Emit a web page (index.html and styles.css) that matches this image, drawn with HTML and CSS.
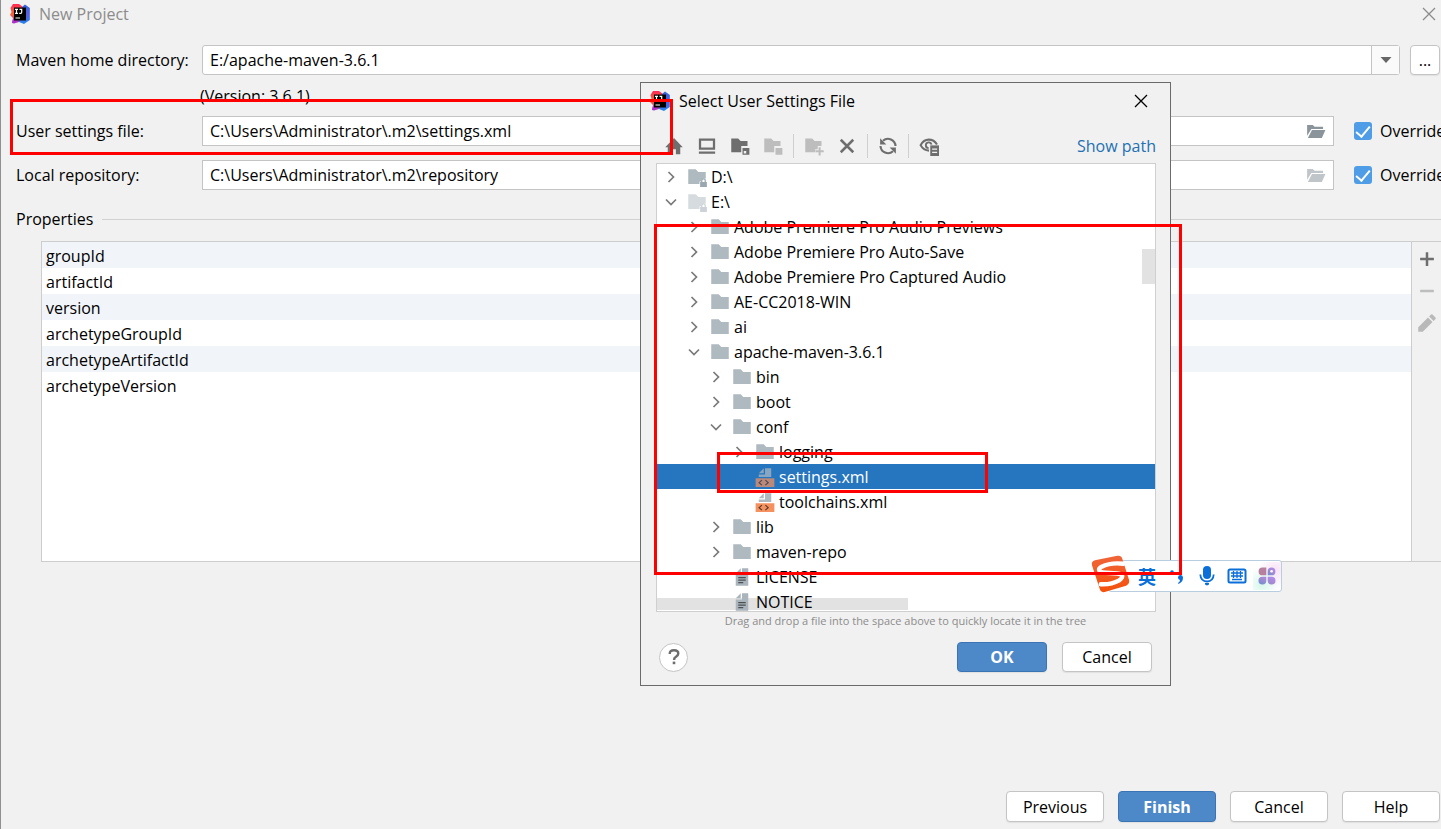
FILE: index.html
```html
<!DOCTYPE html>
<html lang="en">
<head>
<meta charset="utf-8">
<title>New Project</title>
<link rel="stylesheet" href="styles.css">
</head>
<body>
<svg class="defs" aria-hidden="true">
  <defs>
    <linearGradient id="ij-blue" x1="0" y1="0" x2="0" y2="1"><stop offset="0" stop-color="#2f63e0"/><stop offset=".5" stop-color="#5a5fe0"/><stop offset="1" stop-color="#1f86f0"/></linearGradient>
    <linearGradient id="ij-pink" x1="0" y1="0" x2="0" y2="1"><stop offset="0" stop-color="#fe2857"/><stop offset=".5" stop-color="#f9672f"/><stop offset="1" stop-color="#a02fd0"/></linearGradient>
    <linearGradient id="sg-orange" x1="0" y1="0" x2="0" y2="1"><stop offset="0" stop-color="#f0653a"/><stop offset="1" stop-color="#f4510b"/></linearGradient>
    <linearGradient id="petal" x1="0" y1="1" x2="1" y2="0"><stop offset="0" stop-color="#6a8fd0"/><stop offset=".5" stop-color="#a58ad2"/><stop offset="1" stop-color="#b58af5"/></linearGradient>
    <symbol id="i-idea" viewBox="0 0 20 20">
      <path fill="url(#ij-pink)" d="M3 0h6l4 3v13l-4 2-5 1.500-2-.5 1-5-3-3 1.500-3L.5 4z"/>
      <path fill="url(#ij-blue)" d="M12 3l3-2.500L19.800 4v12L14 20l-5-2z"/>
      <path fill="#b02fd8" d="M3 15h8l-6 3-3 1z"/>
      <path fill="#000" d="M4 3.500h12v13H4z"/>
      <path fill="none" stroke="#fff" stroke-width="1.200" d="M5 5.300h3M6.500 5.300v4M5 9.300h3M9.500 5.300h2.200v3q0 1-1 1H9.200M5.500 14h4.500"/>
    </symbol>
    <symbol id="i-close" viewBox="0 0 14 14"><path fill="none" stroke="currentColor" stroke-width="1.300" d="M1 1l12 12M13 1L1 13"/></symbol>
    <symbol id="i-folder" viewBox="0 0 16 16"><path fill="#aeb9c0" d="M1 1.800h6l2 2.200h6v9.600H1z"/></symbol>
    <symbol id="i-disk" viewBox="0 0 16 16"><path fill="#aeb9c0" d="M1 1.800h6l2 2.200h6v5.200h-1.500a2 2 0 0 0-2 1.200v1.200H10v2H1z"/><path fill="#9aa7b0" fill-rule="evenodd" d="M10.500 12h.8v-1.200a1.900 1.900 0 0 1 3.800 0V12h.8v4h-5.400zM12.300 12h1.800v-1.200a.9.900 0 0 0-1.800 0z"/></symbol>
    <symbol id="i-open" viewBox="0 0 20 16"><path fill="currentColor" d="M0 1h6l2 2h9v2.200H4.500L0 12.500zM5.200 6.500H19.500L15.700 15H.8z"/></symbol>
    <symbol id="i-right" viewBox="0 0 12 12"><path fill="none" stroke="#7a7a7a" stroke-width="1.700" d="M3.500 1l5 5-5 5"/></symbol>
    <symbol id="i-down" viewBox="0 0 12 12"><path fill="none" stroke="#7a7a7a" stroke-width="1.700" d="M1 3.500l5 5 5-5"/></symbol>
    <symbol id="i-text" viewBox="0 0 16 16"><path fill="#a9b4bc" d="M7 1v4H3zM8 1h5v14H3V6h5z"/><path stroke="#4c5053" stroke-width="1.100" d="M5 8.500h6M5 10.500h6M5 12.500h4"/></symbol>
    <symbol id="i-xml" viewBox="0 0 16 16"><path fill="#aeb9c0" d="M7 1v4H3zM8 1h5v7H3V6h5z"/><path class="xml-tag" d="M.5 9h15v7H.5z"/><path fill="none" stroke="#5a3a2c" stroke-width="1" d="M5.500 10.500L3.300 12.500l2.200 2M8.300 10.500l2.200 2-2.200 2"/></symbol>
  </defs>
</svg>

<main class="window">
  <header class="titlebar">
    <svg class="logo"><use href="#i-idea"/></svg>
    <h1 class="title muted">New Project</h1>
    <button class="plain close muted" aria-label="Close window"><svg class="x"><use href="#i-close"/></svg></button>
  </header>

  <form class="form">
    <label for="home">Maven home directory:</label>
    <div class="field-row">
      <div class="combo">
        <select id="home"><option>E:/apache-maven-3.6.1</option></select>
        <span class="combo-arrow"><svg width="12" height="8" viewBox="0 0 12 8"><path fill="#666" d="M.5 1h11L6 7z"/></svg></span>
      </div>
      <button type="button" class="btn browse">...</button>
    </div>
    <p class="version">(Version: 3.6.1)</p>
    <label for="settings">User settings file:</label>
    <div class="field-row path-row">
      <div class="path"><input id="settings" type="text" value="C:\Users\Administrator\.m2\settings.xml"><button type="button" class="plain open" aria-label="Browse settings file"><svg><use href="#i-open"/></svg></button></div>
      <label class="check"><input type="checkbox" checked>Override</label>
    </div>
    <label for="repo">Local repository:</label>
    <div class="field-row path-row">
      <div class="path"><input id="repo" type="text" value="C:\Users\Administrator\.m2\repository"><button type="button" class="plain open dim" aria-label="Browse repository"><svg><use href="#i-open"/></svg></button></div>
      <label class="check"><input type="checkbox" checked>Override</label>
    </div>
  </form>

  <h2 class="section">Properties</h2>
  <section class="properties">
    <div class="table-area">
      <table>
        <tbody>
          <tr><td>groupId</td></tr>
          <tr><td>artifactId</td></tr>
          <tr><td>version</td></tr>
          <tr><td>archetypeGroupId</td></tr>
          <tr><td>archetypeArtifactId</td></tr>
          <tr><td>archetypeVersion</td></tr>
        </tbody>
      </table>
    </div>
    <div class="side-tools">
      <button class="plain" aria-label="Add"><svg viewBox="0 0 16 16"><path stroke="#6e6e6e" stroke-width="2" d="M8 2.500v11M2.500 8h11"/></svg></button>
      <button class="plain" aria-label="Remove"><svg viewBox="0 0 16 16"><path stroke="#bdbdbd" stroke-width="2" d="M2.500 8h11"/></svg></button>
      <button class="plain" aria-label="Edit"><svg viewBox="0 0 16 16"><path fill="#b9b9b9" d="M1 15v-3.600l7.800-7.800 3.600 3.600L4.600 15zM9.700 2.700l1.500-1.500q.6-.5 1.200 0l2.400 2.400q.5.600 0 1.200l-1.500 1.500z"/></svg></button>
    </div>
  </section>

  <footer class="footer">
    <button class="btn">Previous</button>
    <button class="btn primary">Finish</button>
    <button class="btn">Cancel</button>
    <button class="btn">Help</button>
  </footer>
</main>

<section class="dialog" role="dialog" aria-labelledby="dialog-title">
  <header class="dialog-title">
    <svg class="logo"><use href="#i-idea"/></svg>
    <h2 class="title" id="dialog-title">Select User Settings File</h2>
    <button class="plain close" aria-label="Close dialog"><svg class="x"><use href="#i-close"/></svg></button>
  </header>

  <div class="toolbar">
    <button class="plain" aria-label="Home"><svg viewBox="0 0 16 16"><path fill="#6e6e6e" d="M8 1.500L15 9h-2v5.500H9.500v-4h-3v4H3V9H1z"/></svg></button>
    <button class="plain" aria-label="Desktop"><svg viewBox="0 0 16 16"><path fill="#6e6e6e" fill-rule="evenodd" d="M1.500 2h13v9h-13zM3.300 3.800v5.400h9.400V3.800zM1.500 12.400h13v1.800h-13z"/></svg></button>
    <button class="plain" aria-label="Project"><svg viewBox="0 0 16 16"><path fill="#6e6e6e" d="M1 2h5.500l2 2H14v4H9v5H1z"/><path fill="#6e6e6e" fill-rule="evenodd" d="M10 9.500h5.500V15H10zM11 12v2h2v-2z"/></svg></button>
    <button class="plain" aria-label="Module"><svg viewBox="0 0 16 16"><path fill="#bdbdbd" d="M1 2h5.500l2 2H14v4H9v5H1zM10 9.500h5.500V15H10z"/></svg></button>
    <span class="sep"></span>
    <button class="plain" aria-label="New folder"><svg viewBox="0 0 16 16"><path fill="#bdbdbd" d="M1 2h5.500l2 2H14v4h-3v2.500H9V13H1z"/><path stroke="#bdbdbd" stroke-width="1.600" d="M12.500 9v6.500M9.300 12.200h6.500"/></svg></button>
    <button class="plain" aria-label="Delete"><svg viewBox="0 0 16 16"><path fill="none" stroke="#6e6e6e" stroke-width="2" d="M3 3l10 10M13 3L3 13"/></svg></button>
    <span class="sep"></span>
    <button class="plain" aria-label="Refresh"><svg viewBox="0 0 16 16"><path fill="none" stroke="#6e6e6e" stroke-width="1.700" d="M14 8A6 6 0 0 0 4 3.800M2 8a6 6 0 0 0 10 4.200"/><path fill="#6e6e6e" d="M1.700 1.800v5h5zM14.300 14.200v-5h-5z"/></svg></button>
    <span class="sep"></span>
    <button class="plain" aria-label="Show hidden files"><svg viewBox="0 0 16 16"><path fill="none" stroke="#6e6e6e" stroke-width="1.700" d="M8 11.700Q3.500 11.500 1.300 7.300 3.600 2.900 7.800 2.900t6.600 3.900"/><path fill="none" stroke="#6e6e6e" stroke-width="1.500" d="M7.700 9.700A2.300 2.300 0 1 1 10 6.900"/><path fill="#6e6e6e" d="M9 7.500h7V16H9z"/><path stroke="#f2f2f2" d="M10.500 10.500h4M10.500 13h4"/></svg></button>
    <a class="show-path" href="#path">Show path</a>
  </div>

  <div class="tree" role="tree">
    <div class="node l0" role="treeitem"><svg class="chev"><use href="#i-right"/></svg><svg class="ico"><use href="#i-disk"/></svg>D:\</div>
    <div class="node l0" role="treeitem"><svg class="chev"><use href="#i-down"/></svg><svg class="ico faded"><use href="#i-disk"/></svg>E:\</div>
    <div class="node l1" role="treeitem"><svg class="chev"><use href="#i-right"/></svg><svg class="ico"><use href="#i-folder"/></svg>Adobe Premiere Pro Audio Previews</div>
    <div class="node l1" role="treeitem"><svg class="chev"><use href="#i-right"/></svg><svg class="ico"><use href="#i-folder"/></svg>Adobe Premiere Pro Auto-Save</div>
    <div class="node l1" role="treeitem"><svg class="chev"><use href="#i-right"/></svg><svg class="ico"><use href="#i-folder"/></svg>Adobe Premiere Pro Captured Audio</div>
    <div class="node l1" role="treeitem"><svg class="chev"><use href="#i-right"/></svg><svg class="ico"><use href="#i-folder"/></svg>AE-CC2018-WIN</div>
    <div class="node l1" role="treeitem"><svg class="chev"><use href="#i-right"/></svg><svg class="ico"><use href="#i-folder"/></svg>ai</div>
    <div class="node l1" role="treeitem"><svg class="chev"><use href="#i-down"/></svg><svg class="ico"><use href="#i-folder"/></svg>apache-maven-3.6.1</div>
    <div class="node l2" role="treeitem"><svg class="chev"><use href="#i-right"/></svg><svg class="ico"><use href="#i-folder"/></svg>bin</div>
    <div class="node l2" role="treeitem"><svg class="chev"><use href="#i-right"/></svg><svg class="ico"><use href="#i-folder"/></svg>boot</div>
    <div class="node l2" role="treeitem"><svg class="chev"><use href="#i-down"/></svg><svg class="ico"><use href="#i-folder"/></svg>conf</div>
    <div class="node l3" role="treeitem"><svg class="chev"><use href="#i-right"/></svg><svg class="ico"><use href="#i-folder"/></svg>logging</div>
    <div class="node l3 selected" role="treeitem" aria-selected="true"><span class="chev"></span><svg class="ico"><use href="#i-xml"/></svg>settings.xml</div>
    <div class="node l3" role="treeitem"><span class="chev"></span><svg class="ico"><use href="#i-xml"/></svg>toolchains.xml</div>
    <div class="node l2" role="treeitem"><svg class="chev"><use href="#i-right"/></svg><svg class="ico"><use href="#i-folder"/></svg>lib</div>
    <div class="node l2" role="treeitem"><svg class="chev"><use href="#i-right"/></svg><svg class="ico"><use href="#i-folder"/></svg>maven-repo</div>
    <div class="node l2" role="treeitem"><span class="chev"></span><svg class="ico"><use href="#i-text"/></svg>LICENSE</div>
    <div class="node l2" role="treeitem"><span class="chev"></span><svg class="ico"><use href="#i-text"/></svg>NOTICE</div>
    <span class="thumb-v"></span>
    <span class="thumb-h"></span>
  </div>
  <p class="hint">Drag and drop a file into the space above to quickly locate it in the tree</p>

  <footer class="dialog-actions">
    <button class="help" aria-label="Help"><svg width="14" height="18" viewBox="0 0 14 18"><path fill="none" stroke="#6e6e6e" stroke-width="2.400" d="M2.700 6Q2.700 2.200 7 2.200T11.300 5.500Q11.300 7.300 9 8.700 7 9.900 7 12"/><path fill="#6e6e6e" d="M5.700 13.600h2.600v2.600H5.700z"/></svg></button>
    <button class="btn primary">OK</button>
    <button class="btn">Cancel</button>
  </footer>
</section>

<aside class="ime" lang="zh-CN">
  <svg class="ime-logo" viewBox="0 0 40 38"><path fill="url(#sg-orange)" d="M4 5L27 .3Q31-.3 32 3l7 22q1 4-3 6l-22 6.500q-4 .8-5-3L1 10q-.8-4 3-5z"/><path fill="none" stroke="#fff" stroke-width="4.500" stroke-linecap="round" d="M33 8.500Q20 7 11 11.500 5 15 12 17.500L27 18.500Q36 20 29 25.500 21 30 10 29.500"/></svg>
  <span class="ime-mode">英</span>
  <svg class="ime-ico" viewBox="0 0 20 20"><circle cx="5" cy="6" r="1.800" fill="#0a6fd8"/><path fill="#0a6fd8" d="M11 17q2-1 2-3a2.500 2.500 0 1 1 3-2.500q0 4.500-4.500 6.500z"/></svg>
  <svg class="ime-ico" viewBox="0 0 20 20"><rect x="6" y="0" width="8" height="13" rx="4" fill="#0a6fd8"/><path fill="none" stroke="#0a6fd8" stroke-width="1.800" d="M3.300 8.500q.5 7 6.700 7t6.700-7"/><path fill="#0a6fd8" d="M8 17h4v1.500l-2 1-2-1z"/></svg>
  <svg class="ime-ico" viewBox="0 0 20 20"><rect x="1.500" y="3.500" width="17" height="13" rx="1.500" fill="#fff" stroke="#0a6fd8" stroke-width="2"/><path fill="none" stroke="#0a6fd8" stroke-width="1.300" d="M4 7h12M4 10h12M6.500 5v7M10 5v7M13.500 5v7M5 13.500h10"/></svg>
  <span class="ime-skin"><svg class="ime-ico" viewBox="0 0 20 20"><g fill="url(#petal)"><path fill="#b8809f" d="M5.500 1.500H9.300v7.800H5.500a3.900 3.900 0 0 1 0-7.800z"/><path d="M14.500 1.500a3.900 3.900 0 1 1 0 7.800h-3.800V5.400a3.900 3.900 0 0 1 3.800-3.900z"/><path d="M5.500 10.700h3.800v3.900a3.900 3.900 0 1 1-3.800-3.900zM10.700 10.700h3.800a3.900 3.900 0 1 1-3.800 3.900z"/></g><circle cx="14.600" cy="5.300" r="1.300" fill="#fff"/></svg></span>
</aside>

<div class="mark mark-field"></div>
<div class="mark mark-tree"></div>
<div class="mark mark-file"></div>
</body>
</html>
```

FILE: styles.css
```css
* { box-sizing: border-box; }
body {
  margin: 0;
  min-height: 100vh;
  position: relative;
  overflow: hidden;
  background: #f1f1f1;
  color: #000;
  font: 16px/20px "Open Sans", "Noto Sans", "Noto Sans CJK SC", sans-serif;
}
h1, h2, p { margin: 0; font-size: inherit; font-weight: 400; }
button, input, select { font: inherit; color: inherit; }
svg { display: block; flex: none; }
.defs { position: absolute; width: 0; height: 0; }
.plain { display: grid; place-items: center; padding: 0; border: 0; background: none; }
.muted { color: #8c8c8c; }

.window {
  min-height: 100vh;
  display: flex;
  flex-direction: column;
  border-left: 1px solid #909090;
}
.titlebar { display: flex; align-items: center; gap: 9px; height: 28px; padding: 0 5px 0 9px; }
.logo { width: 20px; height: 20px; }
.title { flex: 1; }
.x { width: 14px; height: 14px; }

.form {
  display: grid;
  grid-template-columns: 185px minmax(0, 1fr);
  align-items: center;
  padding: 17px 0 0 15px;
}
.field-row { display: flex; gap: 10px; padding-right: 1px; height: 30px; margin-left: 1px; }
.combo { position: relative; flex: 1; }
.combo select {
  width: 100%;
  height: 30px;
  padding: 0 36px 0 7px;
  border: 1px solid #c4c4c4;
  border-radius: 3px;
  background: #fff;
  appearance: none;
}
.combo-arrow {
  position: absolute;
  inset: 1px 1px 1px auto;
  width: 28px;
  display: grid;
  place-items: center;
  background: #fafafa;
  border-left: 1px solid #c4c4c4;
  pointer-events: none;
}
.version { grid-column: 2; margin: 11px 0 10px -1px; }
.path-row { gap: 20px; padding: 0; margin-bottom: 14px; }
.path-row:last-child { margin-bottom: 0; }
.form > label { align-self: start; padding-top: 5px; }
.path { flex: 1; display: flex; border: 1px solid #c4c4c4; background: #fff; }
.path input { flex: 1; min-width: 0; padding: 0 7px; border: 0; background: none; }
.open { width: 34px; color: #8a949b; }
.open svg { width: 19px; height: 15px; }
.open.dim { color: #c0c5c9; }
.check { display: flex; align-items: center; gap: 8px; width: 87px; white-space: nowrap; }
.check input {
  appearance: none;
  display: grid;
  place-items: center;
  flex: none;
  width: 18px;
  height: 18px;
  margin: 0;
  border-radius: 3px;
  background: #4f9de6;
}
.check input::after {
  content: "";
  width: 6px;
  height: 12px;
  margin-bottom: 3px;
  border: solid #fff;
  border-width: 0 2px 2px 0;
  transform: rotate(40deg);
}

.section { display: flex; align-items: center; gap: 9px; margin: 19px 0 12px; padding-left: 15px; }
.section::after { content: ""; flex: 1; height: 1px; background: #d1d1d1; }
.properties { display: flex; height: 321px; margin-left: 40px; border: 1px solid #cdcdcd; border-right: 0; }
.table-area { flex: 1; background: #fff; }
.table-area table { width: 100%; border-collapse: collapse; }
.table-area td { height: 26px; padding: 2px 4px 0; line-height: 24px; }
.table-area tr:nth-child(odd) { background: #f1f5fa; }
.side-tools { width: 30px; display: flex; flex-direction: column; gap: 12px; padding-top: 7px; border-left: 1px solid #cdcdcd; }
.side-tools svg { width: 20px; height: 20px; }

.btn {
  width: 98px;
  height: 31px;
  padding: 0;
  border: 1px solid #c4c4c4;
  border-radius: 4px;
  background: #fff;
  box-shadow: 0 1px 1px #e0e0e0;
}
.browse { width: 30px; height: 30px; }
.primary { border-color: #3a74b5; background: #4d89c9; color: #fff; font-weight: 700; }
.footer { display: flex; justify-content: flex-end; gap: 14px; margin-top: auto; padding: 0 1px 7px 0; }

.dialog {
  position: absolute;
  left: 640px;
  top: 82px;
  width: 531px;
  border: 1px solid #6b6b6b;
  background: #f1f1f1;
}
.dialog-title { display: flex; align-items: center; gap: 9px; height: 36px; padding: 0 22px 0 9px; }
.toolbar { display: flex; align-items: center; height: 44px; padding: 10px 14px 0 23px; gap: 13px; }
.toolbar svg { width: 20px; height: 20px; }
.toolbar .sep { width: 1px; height: 24px; margin: 0 -3px; background: #cfcfcf; }
.show-path { margin-left: auto; color: #2470b3; text-decoration: none; }
.tree {
  position: relative;
  height: 449px;
  margin: 0 14px 0 15px;
  overflow: hidden;
  border: 1px solid #cfcfcf;
  background: #fff;
}
.node { position: relative; z-index: 1; display: flex; align-items: center; height: 25px; white-space: nowrap; }
.chev { width: 12px; height: 12px; margin-right: 10px; flex: none; }
.ico { width: 20px; height: 20px; margin-right: 4px; }
.faded { opacity: .5; }
.l0 { padding-left: 8px; }
.l1 { padding-left: 31px; }
.l2 { padding-left: 53px; }
.l3 { padding-left: 76px; }
.xml-tag { fill: #f4915f; }
.selected { background: #2675bf; color: #fff; }
.selected .ico { opacity: .72; }
.thumb-v { position: absolute; top: 85px; right: 0; width: 13px; height: 35px; background: #e2e2e2; }
.thumb-h { position: absolute; left: 0; bottom: 1px; width: 251px; height: 12px; background: #e2e2e2; }
.hint { font-size: 11px; line-height: 18px; text-align: center; color: #8c8c8c; }
.dialog-actions { display: flex; align-items: center; gap: 15px; padding: 12px 18px 13px; }
.dialog-actions .btn { width: 90px; height: 30px; }
.help {
  display: grid;
  place-items: center;
  width: 29px;
  height: 29px;
  margin-right: auto;
  padding: 0;
  border: 1px solid #c4c4c4;
  border-radius: 50%;
  background: #fff;
}

.ime {
  position: absolute;
  left: 1108px;
  top: 560px;
  display: flex;
  align-items: center;
  gap: 10px;
  width: 174px;
  height: 32px;
  padding-left: 29px;
  background: #fff;
  border: 1px solid #b9cde0;
  border-radius: 3px;
}
.ime-logo { position: absolute; left: -18px; top: -6px; width: 39px; height: 38px; }
.ime-mode { width: 19px; color: #0a6fd8; font: 700 18px/20px "Noto Sans CJK SC", sans-serif; }
.ime-ico { width: 20px; height: 20px; }
.ime-skin { padding: 4px; margin-left: -4px; background: radial-gradient(circle at 30% 80%, #d8f8ec, transparent 60%), radial-gradient(circle at 80% 30%, #f8e2f6, transparent 60%); }

.mark { position: absolute; border: 3px solid #f00; pointer-events: none; z-index: 2; }
.mark-field { left: 10px; top: 99px; width: 663px; height: 56px; }
.mark-tree { left: 654px; top: 224px; width: 528px; height: 351px; }
.mark-file { left: 717px; top: 452px; width: 271px; height: 41px; }
```
